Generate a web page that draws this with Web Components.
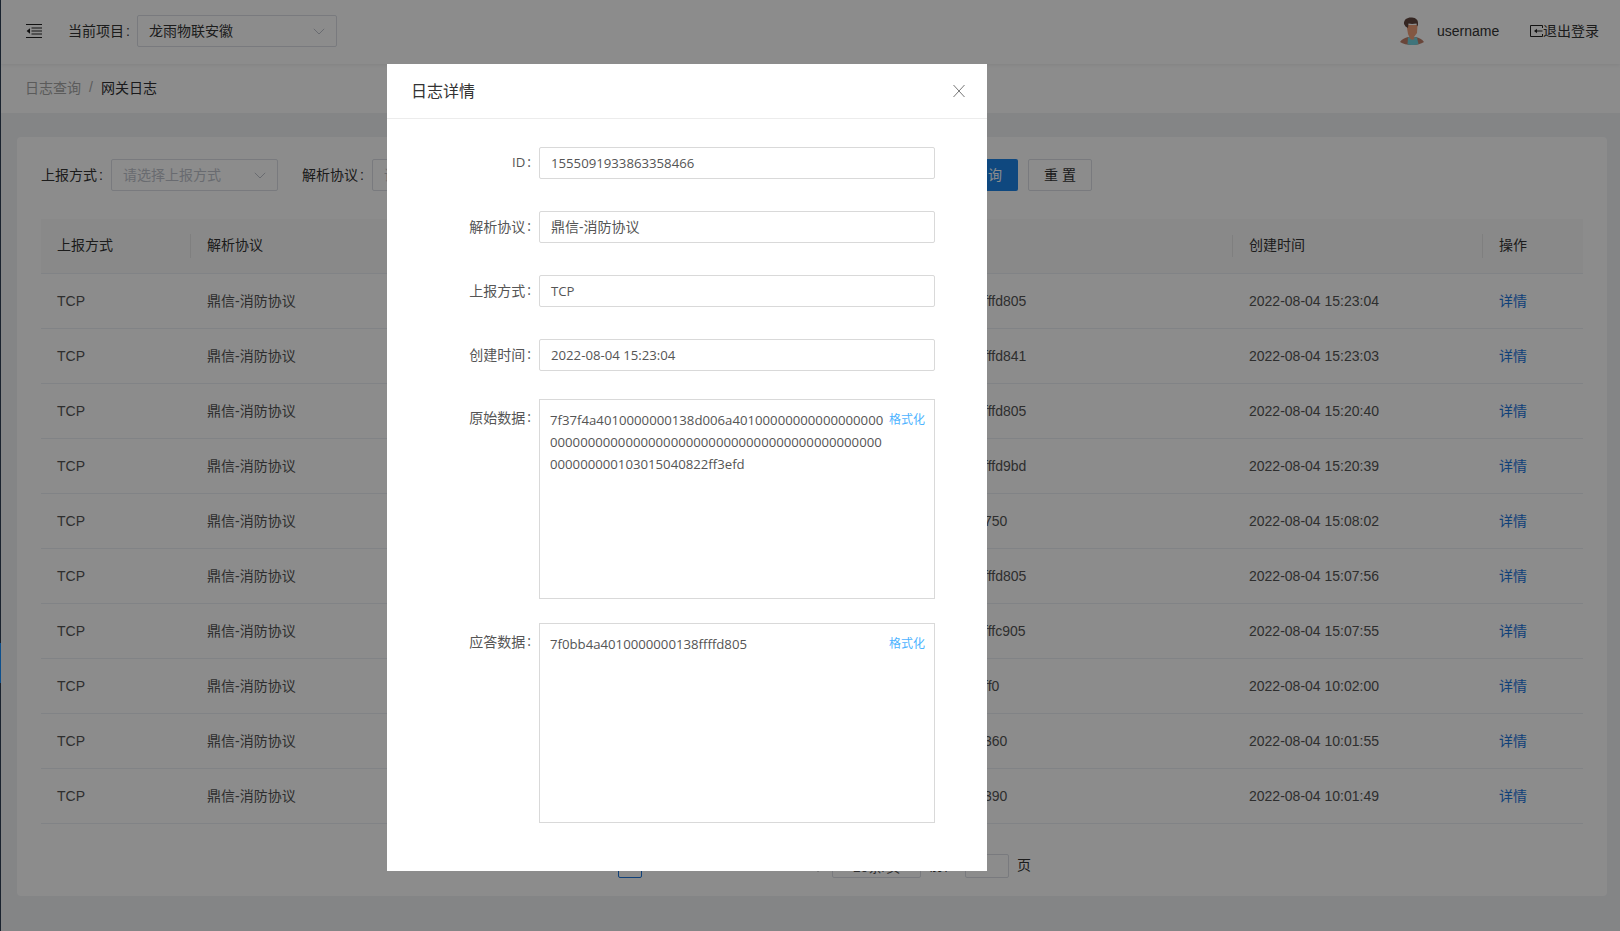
<!DOCTYPE html>
<html lang="zh"><head><meta charset="utf-8"><title>网关日志</title>
<style>
html,body{margin:0;height:100%;overflow:hidden;background:#f0f2f5}
body{font:14px "Liberation Sans","Noto Sans CJK SC",sans-serif;color:#333}
</style></head><body>
<x-app>
  <x-header slot="header"></x-header>
  <x-breadcrumb slot="header"></x-breadcrumb>
  <x-card>
    <x-filter></x-filter>
    <x-table></x-table>
    <x-pagination></x-pagination>
  </x-card>
</x-app>
<x-modal heading="日志详情">
  <x-field label="ID" value="1555091933863358466" ascii gap="32"></x-field>
  <x-field label="解析协议" value="鼎信-消防协议" gap="32"></x-field>
  <x-field label="上报方式" value="TCP" ascii gap="32"></x-field>
  <x-field label="创建时间" value="2022-08-04 15:23:04" ascii gap="28"></x-field>
  <x-field label="原始数据" multi gap="24" value="7f37f4a4010000000138d006a40100000000000000000|00000000000000000000000000000000000000000000|000000000103015040822ff3efd"></x-field>
  <x-field label="应答数据" multi gap="0" value="7f0bb4a4010000000138ffffd805"></x-field>
</x-modal>
<script>
const chevron='<svg width="12" height="7" viewBox="0 0 12 7" fill="none" stroke="currentColor" stroke-width="1"><path d="M.8.8 6 6l5.2-5.2"/></svg>';
function def(name,css,html,init){
  customElements.define(name,class extends HTMLElement{
    constructor(){super();this.attachShadow({mode:'open'});}
    connectedCallback(){
      const a=n=>this.getAttribute(n);
      this.shadowRoot.innerHTML='<style>'+css+'</style>'+(typeof html==='function'?html(a,this):html);
      if(init)init(this.shadowRoot,this);
    }
  });
}
const CJK='padding-bottom:2px;';
def('x-select',`
:host{display:inline-flex;align-items:center;justify-content:space-between;box-sizing:border-box;height:32px;border:1px solid #dcdfe6;border-radius:2px;background:#fff;padding:0 11px;flex:none;font-size:14px;color:#333}
:host([ph]){color:#c0c4cc}
span{${CJK}}
svg{color:#c0c4cc;flex:none}`,
(a)=>`<span>${a('text')}</span>${chevron}`);
def('x-app',`
:host{display:flex;height:931px}
.side{width:1px;flex:none;background:#304156}
.side i{display:block;height:40px;background:#1890ff;margin-top:643px}
.main{flex:1;min-width:0;display:flex;flex-direction:column}
.body{flex:1;padding:24px 13px 35px 16px;box-sizing:border-box}`,
`<div class="side"><i></i></div><div class="main"><slot name="header"></slot><div class="body"><slot></slot></div></div>`);
def('x-header',`
:host{display:flex;align-items:center;height:64px;box-sizing:border-box;padding:0 21px 2px 25px;background:#fff;box-shadow:0 1px 4px rgba(0,21,41,.08);position:relative;z-index:1;color:#333}
.lbl{margin-left:26px;width:69px;flex:none;${CJK}}
.lbl i{font-style:normal;margin-left:2px}
.right{margin-left:auto;display:flex;align-items:center}
.name{margin:0 30px 0 13px;width:63px}
.out{display:flex;align-items:center}
.out span{${CJK}}
.avatar{display:block}`,
`<svg width="16" height="14" viewBox="0 0 16 14" style="flex:none"><path d="M0 .5h16M0 13.500h16M5.500 4h10.500M5.500 7h10.500M5.500 10h10.500" stroke="#222" fill="none"/><path d="M4 4.200v5.600L.6 7z" fill="#222"/></svg>
<span class="lbl">当前项目<i>:</i></span><x-select text="龙雨物联安徽" style="width:200px"></x-select>
<div class="right">
<svg class="avatar" width="24" height="28" viewBox="0 0 24 28"><path d="M0 25c2-3 5-4 8-5l4 1 4-1c3 1 6 2 8 5-3 2-7 3-12 3S3 27 0 25z" fill="#c0806a"/><path d="M8 20.500l4-.5 5 .5 1.500 6.800c-4 1-8 1-11 0z" fill="#73d3e0"/><path d="M6.500 8h11l-.5 8-3 4 .5 2c-2 1-3 1-4.500-.5L8 17z" fill="#ef9f78"/><path d="M4 7C3.500 2 8 0 12 .5s6.500 2 6 7.500l-1 1.500-.5-3c-3 .5-6 .5-8 0L8 11 5.500 9.500z" fill="#62463f"/></svg>
<span class="name">username</span>
<span class="out"><svg width="13" height="12" viewBox="0 0 13 12" style="flex:none"><path d="M12.500 3V.5H.5v11h12V9" stroke="#222" fill="none"/><path d="M12.500 6H6.500" stroke="#222" fill="none"/><path d="M7 3.800v4.400L4 6z" fill="#222"/></svg><span>退出登录</span></span>
</div>`);
def('x-breadcrumb',`
:host{display:flex;align-items:center;height:49px;padding:0 0 3px 24px;background:#fff;color:#a6a6a6;box-sizing:border-box}
.s{margin:0 8px;color:#a8a8a8}
b{font-weight:400;color:#303133}`,`<span>日志查询</span><span class="s">/</span><b>网关日志</b>`);
def('x-card',`
:host{display:block;box-sizing:border-box;height:759px;padding:22px 24px 0;background:#fff;border-radius:4px}`,`<slot></slot>`);
def('x-filter',`
:host{display:flex;align-items:center;height:32px;color:#333}
.l{width:70px;flex:none;${CJK}}
.l i{font-style:normal;margin-left:2px}
.l2{margin-left:24px}
.q,.r{box-sizing:border-box;width:64px;height:32px;border-radius:2px;display:flex;align-items:center;justify-content:center;flex:none;${CJK}}
.q{background:#1c84e8;color:#fff;margin-left:415px}
.r{border:1px solid #dcdfe6;margin-left:10px;background:#fff}`,
`<span class="l">上报方式<i>:</i></span><x-select ph text="请选择上报方式" style="width:167px"></x-select>
<span class="l l2">解析协议<i>:</i></span><x-select ph text="请选择解析协议" style="width:167px"></x-select>
<span class="q">查 询</span><span class="r">重 置</span>`);
def('x-table',`
:host{display:block;margin-top:28px;font-size:14px}
.row{display:grid;grid-template-columns:150px 200px 593px 249px 250px 100px;height:55px;border-bottom:1px solid #ebeef5;box-sizing:border-box;align-items:center;color:#555}
.row>span{padding:0 16px;white-space:nowrap;overflow:hidden;min-width:0}
.row>.c{${CJK}}
.row>.tail{padding:0}
.head{background:#fafafa;color:#333}
.head>span{position:relative;line-height:22px}
.head>span:not(:last-child)::after{content:"";position:absolute;right:0;top:0;bottom:0;width:1px;background:#e8e8e8}
.head>span:nth-child(3)::after{display:none}
a{color:#1d76dd}`,
()=>{
 const ends=[['fffd805','15:23:04'],['fffd841','15:23:03'],['fffd805','15:20:40'],['fffd9bd','15:20:39'],['750','15:08:02'],['fffd805','15:07:56'],['fffc905','15:07:55'],['ff0','10:02:00'],['360','10:01:55'],['390','10:01:49']];
 let h='<div class="row head"><span class="c">上报方式</span><span class="c">解析协议</span><span></span><span class="tail">&nbsp;</span><span class="c">创建时间</span><span class="c">操作</span></div>';
 for(const [e,t] of ends) h+=`<div class="row"><span>TCP</span><span class="c">鼎信-消防协议</span><span></span><span class="tail">${e}</span><span>2022-08-04 ${t}</span><span class="c"><a>详情</a></span></div>`;
 return h;
});
def('x-pagination',`
:host{display:flex;align-items:center;height:24px;margin-top:30px;color:#555}
.p{box-sizing:border-box;width:24px;height:24px;border:1px solid #1d76dd;border-radius:2px;margin-left:577px;color:#1d76dd;display:flex;align-items:center;justify-content:center;flex:none}
.n{margin-left:175px;flex:none;display:block}
.sz{margin-left:8px;box-sizing:border-box;width:89px;height:24px;border:1px solid #dcdfe6;border-radius:2px;display:flex;align-items:center;justify-content:center;flex:none}
.t{margin-left:8px;flex:none;color:#333;padding-bottom:5px}
.i{margin:0 8px;box-sizing:border-box;width:44px;height:24px;border:1px solid #dcdfe6;border-radius:2px;flex:none}
.y{color:#333;padding-bottom:5px}`,
`<span class="p">1</span><svg class="n" width="7" height="12" viewBox="0 0 7 12" fill="none" stroke="#555"><path d="M1 .5 6.500 6 1 11.500"/></svg><span class="sz">10条/页</span><span class="t">前往</span><span class="i"></span><span class="y">页</span>`);
def('x-modal',`
:host{position:fixed;inset:0;background:rgba(0,0,0,.45);z-index:10}
.box{position:absolute;left:387px;top:64px;width:600px;height:807px;background:#fff;display:flex;flex-direction:column}
.hd{height:55px;box-sizing:border-box;flex:none;border-bottom:1px solid #ececec;display:flex;align-items:center;justify-content:space-between;padding:0 21px 0 24px;font-size:16px;color:#333}
.hd span{${CJK}}
.bd{padding-top:28px;display:flex;flex-direction:column}`,
(a)=>`<div class="box"><div class="hd"><span>${a('heading')}</span><svg width="14" height="14" viewBox="0 0 14 14" stroke="#777" fill="none" stroke-width="1"><path d="M1.500 1l11 12M12.500 1l-11 12"/></svg></div><div class="bd"><slot></slot></div></div>`);
def('x-field',`
:host{display:flex;align-items:flex-start;color:#555;font-size:14px;font-family:"Open Sans","Noto Sans CJK SC",sans-serif}
.lb{width:144px;height:32px;flex:none;box-sizing:border-box;padding-bottom:3px;display:flex;justify-content:flex-end;align-items:center;white-space:nowrap;font-family:"Noto Sans CJK SC",sans-serif}
.lb .c{font-family:"Open Sans",sans-serif;margin-left:2px}
.lb .a{font:13.2px "Open Sans",sans-serif}
.v{margin-left:8px;box-sizing:border-box;width:396px;height:32px;border:1px solid #d9d9d9;border-radius:2px;padding:0 11px 3px;display:flex;align-items:center;white-space:nowrap}
.v.a{font-size:13.2px;padding-bottom:1px}
:host([multi]) .lb{height:auto;line-height:22px;align-items:flex-start;padding:7px 0 0}
:host([multi]) .v{display:block;height:200px;border-radius:0;padding:9px 10px;line-height:22px;position:relative;font-size:13.2px}
.f{position:absolute;top:11px;right:9px;font:12px/16px "Noto Sans CJK SC",sans-serif;color:#4db3ff}`,
(a,el)=>{
 const multi=el.hasAttribute('multi');
 const val=(a('value')||'').split('|').join('<br>');
 const lab=a('label');
 return `<div class="lb"><span class="${/^[A-Z]/.test(lab)?'a':''}">${lab}</span><span class="c">:</span></div>
 <div class="v ${el.hasAttribute('ascii')?'a':''}">${multi?val:'<span>'+val+'</span>'}${multi?'<span class="f">格式化</span>':''}</div>`;
},
(s,el)=>{el.style.marginBottom=(el.getAttribute('gap')||0)+'px';});
</script>
</body></html>
